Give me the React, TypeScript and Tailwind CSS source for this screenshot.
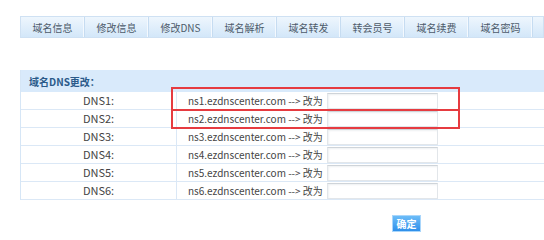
import React from 'react'

const tabs = ['域名信息', '修改信息', '修改DNS', '域名解析', '域名转发', '转会员号', '域名续费', '域名密码']

const rows = [1, 2, 3, 4, 5, 6]

export default function App() {
  return (
    <div className="relative h-[240px] w-[544px] overflow-hidden bg-white text-[11px] text-[#444] [font-family:'Noto_Sans_CJK_SC','Noto_Sans',sans-serif]">
      {/* tab bar */}
      <div className="ml-[20px] mt-[16px] flex h-[22px] border border-[#cfe1f3] bg-gradient-to-b from-[#eef6fd] to-[#d3e7f9]">
        {tabs.map((tab) => (
          <div
            key={tab}
            className="flex w-[64px] items-center justify-center border-r border-[#c6dcf1] text-[10px] text-[#4d5b6a] shadow-[inset_-1px_0_0_#f4f9fe]"
          >
            {tab}
          </div>
        ))}
      </div>

      {/* dns table */}
      <div className="ml-[20px] mt-[32px] border-l border-[#d6e6f6]">
        <div className="flex h-[22px] items-center bg-[#d9eafb] pl-[8px] text-[10px] font-bold text-[#2b5a8a]">
          域名DNS更改：
        </div>
        {rows.map((n) => (
          <div key={n} className="flex h-[18px] border-b border-[#dbe8f6]">
            <div className="flex w-[156px] items-center justify-center border-r border-[#dbe8f6]">
              DNS{n}:
            </div>
            <div className="flex items-center gap-[4px] pl-[11px]">
              <span className="whitespace-nowrap text-[10px]">ns{n}.ezdnscenter.com --&gt; 改为</span>
              <div className="h-[16px] w-[111px] border border-[#e2e6ea] border-t-[#cfd4d9] bg-white shadow-[inset_1px_1px_2px_#eef0f2]" />
            </div>
          </div>
        ))}
      </div>

      <div className="ml-[392px] mt-[15px] flex h-[17px] w-[29px] items-center justify-center border border-[#a9d6fb] bg-gradient-to-b from-[#6bbcf8] to-[#2e8fea] text-[10px] font-bold text-white">
        确定
      </div>

      {/* red annotation boxes */}
      <div className="absolute left-[171px] top-[87px] h-[24px] w-[289px] border-2 border-[#e63b40]" />
      <div className="absolute left-[171px] top-[109px] h-[20px] w-[289px] border-2 border-[#e63b40]" />
    </div>
  )
}
